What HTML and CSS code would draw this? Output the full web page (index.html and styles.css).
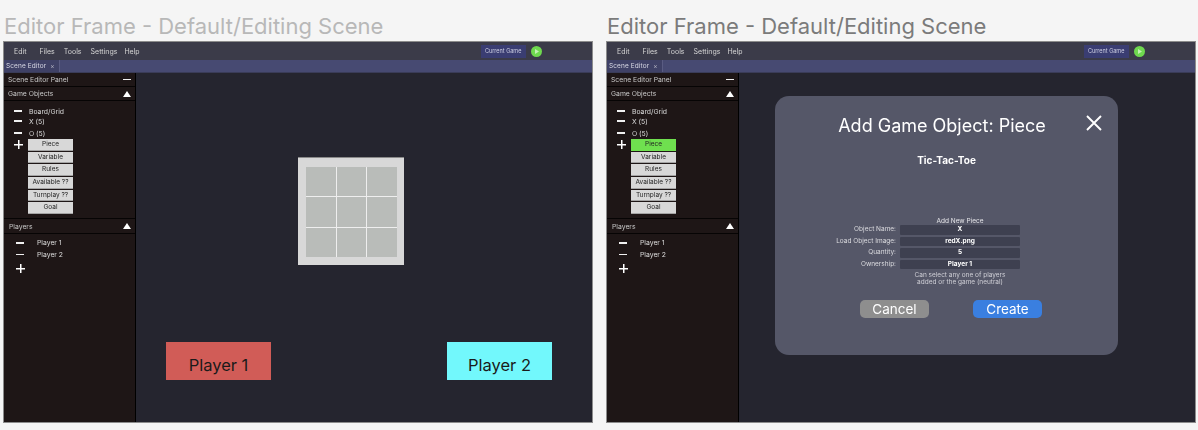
FILE: index.html
```html
<!DOCTYPE html>
<html>
<head>
<meta http-equiv="Content-Type" content="text/html; charset=utf-8"/>
<title>Editor Frame</title>
<link rel="stylesheet" href="styles.css">
</head>
<body>

<section class="column">
  <h1 class="frame-title">Editor Frame - Default/Editing Scene</h1>
  <div class="frame">
    <div class="menubar">
      <span class="menu menu-edit">Edit</span>
      <span class="menu menu-files">Files</span>
      <span class="menu menu-tools">Tools</span>
      <span class="menu menu-settings">Settings</span>
      <span class="menu">Help</span>
      <span class="current-game">Current Game</span>
      <svg class="play" viewBox="0 0 11 11"><circle cx="5.5" cy="5.5" r="5.5" fill="#6fd94f"/><path d="M4 3l4 2.5-4 2.5z" fill="#c4f0b4"/></svg>
    </div>
    <div class="tabbar"><span class="tab">Scene Editor <i class="tab-x">×</i></span></div>
    <div class="workspace">
      <aside class="sidebar">
        <div class="panel-head panel-first"><span>Scene Editor Panel</span><b class="minus"></b></div>
        <div class="panel-head"><span>Game Objects</span><b class="tri"></b></div>
        <div class="objects">
          <div class="obj"><b class="minus"></b><span>Board/Grid</span></div>
          <div class="obj obj-x"><b class="minus"></b><span>X (5)</span></div>
          <div class="obj obj-o"><b class="minus"></b><span>O (5)</span></div>
          <div class="adder">
            <b class="plus"></b>
            <div class="btn-stack">
              <span class="btn">Piece</span>
              <span class="btn">Variable</span>
              <span class="btn">Rules</span>
              <span class="btn">Available ??</span>
              <span class="btn">Turnplay ??</span>
              <span class="btn">Goal</span>
            </div>
          </div>
        </div>
        <div class="panel-head panel-players"><span>Players</span><b class="tri"></b></div>
        <div class="players">
          <div class="player"><b class="minus"></b><span>Player 1</span></div>
          <div class="player"><b class="minus"></b><span>Player 2</span></div>
          <b class="plus plus-player"></b>
        </div>
      </aside>
      <main class="canvas">
        <div class="board">
          <div class="grid">
            <i></i><i></i><i></i><i></i><i></i><i></i><i></i><i></i><i></i>
          </div>
        </div>
        <div class="player-cards">
          <div class="card card-red">Player 1</div>
          <div class="card card-cyan">Player 2</div>
        </div>
      </main>
    </div>
  </div>
</section>

<section class="column column-two">
  <h1 class="frame-title title-dark">Editor Frame - Default/Editing Scene</h1>
  <div class="frame">
    <div class="menubar">
      <span class="menu menu-edit">Edit</span>
      <span class="menu menu-files">Files</span>
      <span class="menu menu-tools">Tools</span>
      <span class="menu menu-settings">Settings</span>
      <span class="menu">Help</span>
      <span class="current-game">Current Game</span>
      <svg class="play" viewBox="0 0 11 11"><circle cx="5.5" cy="5.5" r="5.5" fill="#6fd94f"/><path d="M4 3l4 2.5-4 2.5z" fill="#c4f0b4"/></svg>
    </div>
    <div class="tabbar"><span class="tab">Scene Editor <i class="tab-x">×</i></span></div>
    <div class="workspace">
      <aside class="sidebar">
        <div class="panel-head panel-first"><span>Scene Editor Panel</span><b class="minus"></b></div>
        <div class="panel-head"><span>Game Objects</span><b class="tri"></b></div>
        <div class="objects">
          <div class="obj"><b class="minus"></b><span>Board/Grid</span></div>
          <div class="obj obj-x"><b class="minus"></b><span>X (5)</span></div>
          <div class="obj obj-o"><b class="minus"></b><span>O (5)</span></div>
          <div class="adder">
            <b class="plus"></b>
            <div class="btn-stack">
              <span class="btn btn-on">Piece</span>
              <span class="btn">Variable</span>
              <span class="btn">Rules</span>
              <span class="btn">Available ??</span>
              <span class="btn">Turnplay ??</span>
              <span class="btn">Goal</span>
            </div>
          </div>
        </div>
        <div class="panel-head panel-players"><span>Players</span><b class="tri"></b></div>
        <div class="players">
          <div class="player"><b class="minus"></b><span>Player 1</span></div>
          <div class="player"><b class="minus"></b><span>Player 2</span></div>
          <b class="plus plus-player"></b>
        </div>
      </aside>
      <main class="canvas">
        <div class="modal">
          <h2 class="modal-title">Add Game Object: Piece</h2>
          <svg class="modal-close" viewBox="0 0 16 16"><path d="M1 1l14 14M15 1L1 15" stroke="#fff" stroke-width="1.9" fill="none"/></svg>
          <div class="game-name">Tic-Tac-Toe</div>
          <div class="form-title">Add New Piece</div>
          <div class="form">
            <label>Object Name:</label><span class="field">X</span>
            <label>Load Object Image:</label><span class="field">redX.png</span>
            <label>Quantity:</label><span class="field">5</span>
            <label>Ownership:</label><span class="field">Player 1</span>
          </div>
          <p class="hint">Can select any one of players<br>added or the game (neutral)</p>
          <div class="modal-actions">
            <span class="action action-cancel">Cancel</span>
            <span class="action action-create">Create</span>
          </div>
        </div>
      </main>
    </div>
  </div>
</section>

</body>
</html>
```

FILE: styles.css
```css
html, body {
  margin: 0;
  height: 430px;
  overflow: hidden;
}

body {
  display: flex;
  background-color: #f5f5f5;
  font-family: Inter, "Liberation Sans", sans-serif;
  color: #e8e8e8;
}

.column {
  width: 590px;
  margin-left: 3px;
}

.column-two {
  margin-left: 13px;
}

.frame-title {
  margin: 13px 0 0 1px;
  height: 28px;
  font-size: 22px;
  line-height: 26px;
  font-weight: 400;
  color: #b8b8b8;
  white-space: nowrap;
}

.title-dark {
  color: #7b7b7b;
}

.frame {
  height: 382px;
  border: 1px solid #8c8c8c;
  box-sizing: border-box;
  background-color: #25252f;
  display: flex;
  flex-direction: column;
}

/* top menu */
.menubar {
  height: 18px;
  flex: none;
  display: flex;
  align-items: center;
  padding-left: 10px;
  font-size: 7px;
  background-color: #3b3b49;
  color: #d5d5d5;
  filter: blur(0.3px);
}

.menu {
  margin-right: 8px;
  white-space: nowrap;
}

.menu-edit { margin-right: 13px; }
.menu-files { margin-right: 9px; }
.menu-tools { margin-right: 9px; }
.menu-settings { margin-right: 7px; }

.current-game {
  margin-left: 333px;
  width: 45px;
  height: 13px;
  line-height: 13px;
  text-align: center;
  font-size: 5.5px;
  background-color: #3a3d72;
  color: #cfd0e4;
}

.play {
  width: 11px;
  height: 11px;
  margin-left: 5px;
}

.tabbar {
  height: 13px;
  flex: none;
  display: flex;
  background-color: #474a72;
  border-bottom: 1px solid #3a3c58;
  box-sizing: border-box;
  filter: blur(0.3px);
}

.tab {
  width: 56px;
  padding-left: 2px;
  box-sizing: border-box;
  font-size: 6.5px;
  line-height: 12px;
  letter-spacing: 0.1px;
  white-space: nowrap;
  background-color: #3f4166;
  border-right: 1px solid #5a5c82;
  color: #d8d8e4;
}

.tab-x {
  font-style: normal;
  margin-left: 2px;
  color: #b0b0c0;
}

.workspace {
  flex: 1;
  display: flex;
  min-height: 0;
}

/* left panel */
.sidebar {
  width: 132px;
  flex: none;
  box-sizing: border-box;
  background-color: #1e1616;
  border-right: 1px solid #000;
  font-size: 6.8px;
  color: #dcdcdc;
  filter: blur(0.3px);
}

.panel-head {
  height: 14px;
  display: flex;
  align-items: center;
  justify-content: space-between;
  padding: 0 4px 0 4px;
  border-bottom: 1px solid #060404;
  box-sizing: border-box;
  color: #c8c8c8;
}

.panel-players {
  height: 16px;
  margin-top: 4px;
  border-top: 1px solid #060404;
  padding-left: 5px;
}

.minus {
  display: block;
  width: 8px;
  height: 1.5px;
  flex: none;
  background-color: #f0f0f0;
}

.tri {
  display: block;
  width: 0;
  height: 0;
  border-left: 4px solid transparent;
  border-right: 4px solid transparent;
  border-bottom: 6px solid #fff;
}

.plus {
  display: block;
  width: 9px;
  height: 9px;
  flex: none;
  margin-top: 1px;
  background:
    linear-gradient(#fff, #fff) center / 9px 1.5px no-repeat,
    linear-gradient(#fff, #fff) center / 1.5px 9px no-repeat;
}

.objects {
  padding: 5px 0 0 10px;
}

.obj {
  height: 10px;
  display: flex;
  align-items: center;
  gap: 7px;
}

.obj-o {
  height: 12px;
  margin-top: 1px;
}

.adder {
  display: flex;
  gap: 5px;
}

.btn-stack {
  display: flex;
  flex-direction: column;
  gap: 1px;
}

.btn {
  width: 45px;
  height: 11.7px;
  line-height: 11px;
  box-sizing: border-box;
  border: 1px solid #a4a4a4;
  border-width: 0 0 1px 0;
  text-align: center;
  font-size: 6.5px;
  background-color: #d8d8d8;
  color: #222;
  white-space: nowrap;
}

.btn-on {
  background-color: #6fe04f;
  border-color: #6fe04f;
}

.players {
  padding: 3px 0 0 12px;
}

.player {
  height: 11.5px;
  display: flex;
  align-items: center;
  gap: 13px;
}

.plus-player {
  margin-top: 4px;
}

/* scene area */
.canvas {
  flex: 1;
  position: relative;
  padding: 84px 40px 0 30px;
  display: flex;
  flex-direction: column;
}

.board {
  width: 106px;
  height: 108px;
  box-sizing: border-box;
  align-self: center;
  margin-left: -16px;
  padding: 9px 7px 8px 8px;
  background-color: #d8d8d8;
  border-top: 1px solid #8a8a8a;
}

.grid {
  display: grid;
  grid-template-columns: repeat(3, 1fr);
  grid-template-rows: repeat(3, 1fr);
  gap: 1px;
  height: 90px;
  background-color: #eeeeee;
}

.grid i {
  background-color: #b9bcb9;
}

.player-cards {
  display: flex;
  justify-content: space-between;
  margin-top: 77px;
}

.card {
  width: 105px;
  height: 38px;
  line-height: 46px;
  text-align: center;
  font-size: 16.5px;
  color: #1a1a1a;
}

.card-red {
  background-color: #d15c57;
}

.card-cyan {
  background-color: #72f8fc;
}

/* add piece dialog */
.modal {
  position: absolute;
  left: 36px;
  top: 23px;
  width: 343px;
  height: 259px;
  border-radius: 14px;
  background-color: #555768;
  text-align: center;
  filter: blur(0.2px);
}

.modal-title {
  margin: 19px 0 0 -9px;
  font-size: 18px;
  line-height: 22px;
  font-weight: 400;
  color: #fff;
}

.modal-close {
  position: absolute;
  left: 311px;
  top: 19px;
  width: 16px;
  height: 16px;
}

.game-name {
  margin-top: 17px;
  font-size: 10px;
  line-height: 12px;
  font-weight: 700;
  color: #fff;
}

.form-title {
  margin: 51px 0 0 27px;
  font-size: 6.5px;
  line-height: 8px;
  color: #e4e4e8;
}

.form {
  display: grid;
  grid-template-columns: 125px 120px;
  grid-auto-rows: 9.5px;
  row-gap: 2px;
  font-size: 6.5px;
}

.form label {
  text-align: right;
  padding-right: 4px;
  line-height: 9px;
  color: #dcdce0;
}

.field {
  height: 9.5px;
  line-height: 9.5px;
  border-radius: 1px;
  background-color: #3e4050;
  font-weight: 700;
  color: #fff;
}

.hint {
  margin: 3px 0 0 27px;
  font-size: 6.5px;
  line-height: 7px;
  color: #cfcfd6;
}

.modal-actions {
  display: flex;
  gap: 44px;
  justify-content: center;
  margin: 14px 0 0 9px;
}

.action {
  width: 69px;
  height: 18px;
  line-height: 18px;
  border-radius: 5px;
  font-size: 13.5px;
  color: #fff;
}

.action-cancel {
  background-color: #8e8e8e;
}

.action-create {
  background-color: #3a7fe0;
}
```
